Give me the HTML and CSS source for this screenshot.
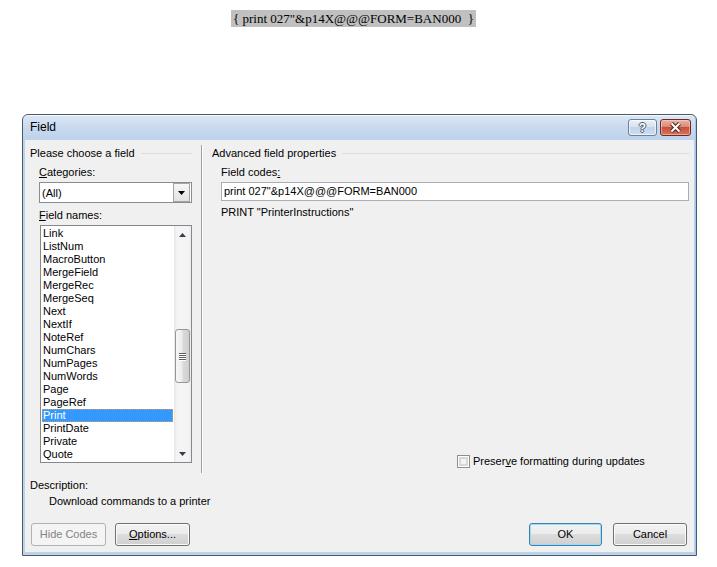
FILE: index.html
```html
<!DOCTYPE html>
<html>
<head>
<meta charset="utf-8">
<title>Field</title>
<link rel="stylesheet" href="styles.css">
</head>
<body>
<div class="doc"><span class="fieldcode">{ print 027"&amp;p14X@@@FORM=BAN000  }</span></div>
<div class="window">
  <div class="titlebar">
    <span class="title">Field</span>
    <div class="tbtns">
      <div class="tbtn help"><span>?</span></div>
      <div class="tbtn close">
        <svg width="31" height="17" viewBox="0 0 31 17"><path d="M11.5 4.5 L19.5 12.5 M19.5 4.5 L11.5 12.5" stroke="#4b2620" stroke-width="4" fill="none"/><path d="M11.5 4.5 L19.5 12.5 M19.5 4.5 L11.5 12.5" stroke="#fff" stroke-width="2" fill="none"/></svg>
      </div>
    </div>
  </div>
  <div class="client">
    <div class="main">
      <div class="left">
        <div class="group"><span>Please choose a field</span><i class="rule"></i></div>
        <div class="lbl ind"><u>C</u>ategories:</div>
        <div class="combo"><span class="ctext">(All)</span><div class="dd"><svg width="7" height="4" viewBox="0 0 7 4"><path d="M0 0 H7 L3.5 4 Z" fill="#000"/></svg></div></div>
        <div class="lbl ind"><u>F</u>ield names:</div>
        <div class="list">
          <ul class="items">
            <li>Link</li>
            <li>ListNum</li>
            <li>MacroButton</li>
            <li>MergeField</li>
            <li>MergeRec</li>
            <li>MergeSeq</li>
            <li>Next</li>
            <li>NextIf</li>
            <li>NoteRef</li>
            <li>NumChars</li>
            <li>NumPages</li>
            <li>NumWords</li>
            <li>Page</li>
            <li>PageRef</li>
            <li class="sel">Print</li>
            <li>PrintDate</li>
            <li>Private</li>
            <li>Quote</li>
          </ul>
          <div class="vscroll">
            <div class="sbtn"><svg width="7" height="4" viewBox="0 0 7 4"><path d="M0 4 H7 L3.5 0 Z" fill="#3d3d3d"/></svg></div>
            <div class="track"><div class="thumb"><i></i><i></i><i></i><i></i></div></div>
            <div class="sbtn"><svg width="7" height="4" viewBox="0 0 7 4"><path d="M0 0 H7 L3.5 4 Z" fill="#3d3d3d"/></svg></div>
          </div>
        </div>
      </div>
      <div class="divider"></div>
      <div class="right">
        <div class="group"><span>Advanced field properties</span><i class="rule"></i></div>
        <div class="lbl ind">Field codes<u>:</u></div>
        <div class="input">print 027"&amp;p14X@@@FORM=BAN000</div>
        <div class="syntax">PRINT "PrinterInstructions"</div>
        <div class="check"><span class="box"></span><span>Preser<u>v</u>e formatting during updates</span></div>
      </div>
    </div>
    <div class="desc">
      <div class="lbl">Description:</div>
      <div class="dtext">Download commands to a printer</div>
    </div>
    <div class="buttons">
      <div class="btn disabled">Hide Codes</div>
      <div class="btn opt"><u>O</u>ptions...</div>
      <div class="btn default ok">OK</div>
      <div class="btn cancel">Cancel</div>
    </div>
  </div>
</div>
</body>
</html>
```

FILE: styles.css
```css
* { box-sizing: border-box; }
html, body { margin: 0; background: #fff; }
body {
  font-family: "Liberation Sans", Arial, sans-serif;
  font-size: 11px;
  color: #000;
}
u { text-decoration: underline; text-underline-offset: 1px; }

.doc { height: 114px; padding: 10px 0 0 231px; }
.fieldcode {
  display: inline-block;
  background: #c0c0c0;
  font-family: "Liberation Serif", "Times New Roman", serif;
  font-size: 13px;
  line-height: 17px;
  padding: 0 2px;
  white-space: pre;
}

.window {
  margin-left: 22px;
  width: 675px;
  height: 442px;
  border: 1px solid #4e5a6a;
  border-radius: 6px 6px 0 0;
  background: linear-gradient(to bottom, #dbe7f5 0px, #c8d9ee 13px, #bcd2eb 25px, #bcd2eb 100%);
  box-shadow: inset 0 1px 0 rgba(255,255,255,0.7), inset -1px 0 0 #9cc8ec;
  padding: 0 2px 3px 2px;
  display: flex;
  flex-direction: column;
}
.titlebar { height: 25px; display: flex; align-items: flex-start; padding-left: 5px; }
.title { font-size: 12px; line-height: 13px; margin-top: 6px; color: #000; }
.tbtns { margin-left: auto; margin-right: 3px; margin-top: 4px; display: flex; gap: 3px; }
.tbtn { height: 17px; border-radius: 3px; }
.help {
  width: 29px;
  border: 1px solid #6f819a;
  background: linear-gradient(to bottom, #eaf1f9 0%, #d7e3f1 45%, #c2d4ea 50%, #cfdef0 100%);
  box-shadow: inset 0 0 0 1px rgba(255,255,255,0.6);
  display: flex; align-items: center; justify-content: center;
}
.help span {
  font-weight: bold; font-size: 12px; line-height: 12px; color: #fff;
  text-shadow: 1px 0 #4a5568, -1px 0 #4a5568, 0 1px #4a5568, 0 -1px #4a5568;
}
.close {
  width: 31px;
  border: 1px solid #6b2b22;
  background: linear-gradient(to bottom, #eab3a5 0%, #d98a78 45%, #c8503b 50%, #d7735c 100%);
  box-shadow: inset 0 0 0 1px rgba(255,220,210,0.5);
  overflow: hidden;
}
.close svg { display: block; margin: -1px; }

.client { flex: 1; background: #f0f0f0; display: flex; flex-direction: column; }
.main { height: 333px; display: flex; padding-top: 5px; }
.left { width: 176px; padding: 2px 9px 0 5px; display: flex; flex-direction: column; }
.divider { width: 2px; border-left: 1px solid #a0a0a0; border-right: 1px solid #fff; }
.right { flex: 1; padding: 2px 5px 5px 9px; display: flex; flex-direction: column; }

.group { display: flex; align-items: center; height: 13px; line-height: 13px; white-space: nowrap; }
.rule { flex: 1; height: 1px; background: #d3dee8; margin-left: 6px; }
.lbl { height: 13px; line-height: 13px; }
.ind { margin-top: 6px; margin-left: 9px; }

.combo {
  margin: 3px 0 0 9px;
  height: 21px;
  border: 1px solid #8a8c90;
  background: #fff;
  display: flex;
  align-items: center;
}
.ctext { flex: 1; padding-left: 2px; }
.dd {
  width: 17px; height: 19px;
  border: 1px solid #a4a4a4;
  background: linear-gradient(to bottom, #f6f6f6, #e2e2e2);
  display: flex; align-items: center; justify-content: center;
  margin-right: 1px;
}
.dd svg { display: block; }
.left .lbl:nth-of-type(3) { margin-top: 4px; }

.list {
  margin: 3px 0 0 10px;
  height: 238px;
  border: 1px solid #828790;
  background: #fff;
  display: flex;
}
.items { list-style: none; margin: 0; padding: 1px; flex: 1; }
.items li { height: 13px; line-height: 13px; padding-left: 1px; white-space: nowrap; }
.items li.sel { background: #3399ff; color: #fff; outline: 1px dotted #d9a04a; outline-offset: -1px; }
.vscroll {
  width: 17px;
  display: flex; flex-direction: column;
  background: linear-gradient(to right, #e6e6e6 0px, #f4f4f4 3px, #f4f4f4 14px, #ececec 17px);
}
.sbtn { height: 17px; display: flex; align-items: center; justify-content: center; }
.sbtn svg { display: block; }
.track { flex: 1; padding-top: 86px; }
.thumb {
  height: 54px; margin: 0 1px;
  border: 1px solid #979797; border-radius: 3px;
  background: linear-gradient(to right, #f6f6f6 0%, #ececec 45%, #d9d9d9 55%, #cfcfcf 100%);
  display: flex; flex-direction: column; align-items: center; justify-content: center; gap: 1px;
}
.thumb i { display: block; width: 7px; height: 1px; background: #5e5e5e; box-shadow: 0 1px 0 #fff; }

.input {
  margin: 3px 0 0 9px;
  height: 19px;
  border: 1px solid #abadb3;
  background: #fff;
  padding-left: 2px;
  line-height: 17px;
  white-space: nowrap;
}
.syntax { margin-top: 5px; height: 13px; line-height: 13px; padding-left: 9px; }
.check { margin-top: auto; margin-left: 245px; display: flex; align-items: center; height: 13px; line-height: 13px; }
.box {
  width: 13px; height: 13px;
  border: 1px solid #8e8f8f;
  background: #f4f4f4;
  box-shadow: inset 0 0 0 1px #fff, inset 0 0 0 3px #d8d8d8;
  margin-right: 3px;
}

.desc { padding-left: 5px; margin-top: 6px; }
.dtext { margin-top: 3px; margin-left: 19px; height: 13px; line-height: 13px; }

.buttons { display: flex; margin-top: 15px; padding: 0 7px 0 6px; }
.btn {
  width: 75px; height: 23px;
  border: 1px solid #707070;
  border-radius: 3px;
  background: linear-gradient(to bottom, #f2f2f2 0%, #ebebeb 50%, #dddddd 50%, #cfcfcf 100%);
  box-shadow: inset 0 0 0 1px #fbfbfb;
  text-align: center;
  line-height: 21px;
}
.btn.disabled { border-color: #adb2b5; background: #f4f4f4; color: #838383; box-shadow: none; }
.btn.opt { margin-left: 9px; }
.btn.ok { margin-left: auto; width: 73px; margin-right: 11px; border-color: #3c7fb1; box-shadow: inset 0 0 0 1px #9ddcf7; }
.btn.cancel { width: 74px; }
```
